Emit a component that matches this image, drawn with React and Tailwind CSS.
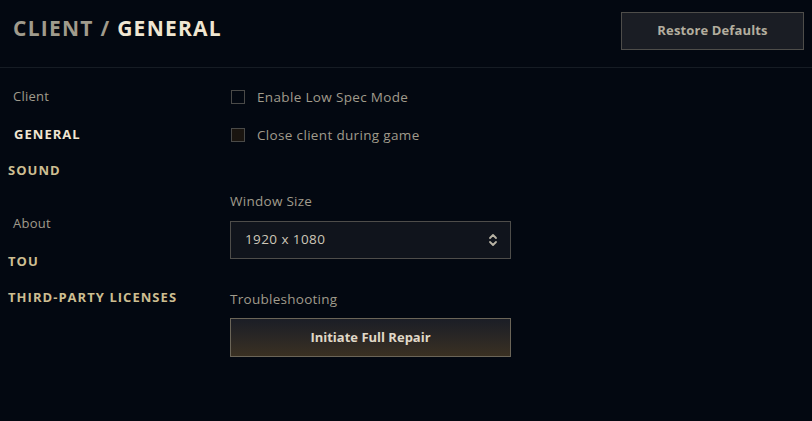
import { useState } from 'react';

const navItems = [
  { label: 'Client', kind: 'group', cls: 'pl-[13px] h-[39px]' },
  { label: 'GENERAL', kind: 'active', cls: 'pl-[14px] h-[37px]' },
  { label: 'SOUND', kind: 'item', cls: 'pl-[8px] h-[34px]' },
  { label: 'About', kind: 'group', cls: 'pl-[13px] h-[70px] pt-[2px]' },
  { label: 'TOU', kind: 'item', cls: 'pl-[8px] h-[8px]' },
  { label: 'THIRD-PARTY LICENSES', kind: 'item', cls: 'pl-[8px] h-[36px] pt-[28px]' },
];

function NavItem({ item }) {
  const base = 'flex items-center leading-none';
  if (item.kind === 'group') {
    return <div className={`${base} ${item.cls} text-[13px] tracking-[0.02em] text-[#a09b8c]`}>{item.label}</div>;
  }
  return (
    <div
      className={`${base} ${item.cls} text-[13px] font-bold tracking-[0.08em] ${
        item.kind === 'active' ? 'text-[#f0e6d2]' : 'text-[#cdbe91]'
      }`}
    >
      {item.label}
    </div>
  );
}

function Checkbox({ label, checked, onChange, dark }) {
  return (
    <label className="flex items-center gap-[12px] h-[18px] cursor-pointer">
      <span
        className={`w-[14px] h-[14px] border border-[#4a4a48] ${dark ? 'bg-[#1a1510]' : 'bg-transparent'}`}
        onClick={onChange}
      >
        {checked && <span className="block w-full h-full bg-[#c8aa6e]" />}
      </span>
      <span className="text-[13.5px] text-[#a09b8c] tracking-[0.025em]">{label}</span>
    </label>
  );
}

export default function App() {
  const [lowSpec, setLowSpec] = useState(false);
  const [closeClient, setCloseClient] = useState(false);

  return (
    <div
      className="w-[812px] h-[421px] bg-[#030811] overflow-hidden"
      style={{ fontFamily: '"Open Sans", "Liberation Sans", sans-serif' }}
    >
      {/* Header */}
      <div className="h-[68px] flex items-start justify-between border-b border-[#161c24]">
        <h1 className="pl-[13px] pt-[14px] text-[21px] font-bold tracking-[0.06em] leading-[28px]">
          <span className="text-[#a09b8c]">CLIENT</span>
          <span className="text-[#a09b8c]"> / </span>
          <span className="text-[#f0e6d2]">GENERAL</span>
        </h1>
        <button className="mt-[12px] mr-[8px] w-[183px] h-[38px] border border-[#4e4d4a] bg-[#1a1d24] text-[13px] font-bold tracking-[0.01em] text-[#b3ae9f]">
          Restore Defaults
        </button>
      </div>

      <div className="flex">
        {/* Sidebar */}
        <nav className="w-[230px] pt-[9px] flex flex-col">
          {navItems.map((item) => (
            <NavItem key={item.label} item={item} />
          ))}
        </nav>

        {/* Content */}
        <div className="flex-1 pt-[20px]">
          <div className="pl-[1px] flex flex-col gap-[20px]">
            <Checkbox label="Enable Low Spec Mode" checked={lowSpec} onChange={() => setLowSpec(!lowSpec)} />
            <Checkbox label="Close client during game" checked={closeClient} dark onChange={() => setCloseClient(!closeClient)} />
          </div>

          <div className="mt-[51px] text-[13.5px] tracking-[0.02em] text-[#a09b8c] leading-none">Window Size</div>
          <div className="mt-[12px] w-[281px] h-[38px] border border-[#4e4d4a] bg-[#10141c] flex items-center justify-between pl-[14px] pr-[12px]">
            <span className="text-[13.5px] tracking-[0.03em] text-[#cdc7b8]">1920 x 1080</span>
            <svg width="10" height="14" viewBox="0 0 10 14" fill="none" stroke="#b8b3a4" strokeWidth="1.8" strokeLinecap="round" strokeLinejoin="round">
              <path d="M2 5 L5 2 L8 5" />
              <path d="M2 9 L5 12 L8 9" />
            </svg>
          </div>

          <div className="mt-[34px] text-[13.5px] tracking-[0.02em] text-[#a09b8c] leading-none">Troubleshooting</div>
          <button className="mt-[12px] w-[281px] h-[39px] border border-[#6b6558] bg-gradient-to-b from-[#1b1e26] to-[#3a3022] text-[13px] font-bold text-[#e0d9c8]">
            Initiate Full Repair
          </button>
        </div>
      </div>
    </div>
  );
}
